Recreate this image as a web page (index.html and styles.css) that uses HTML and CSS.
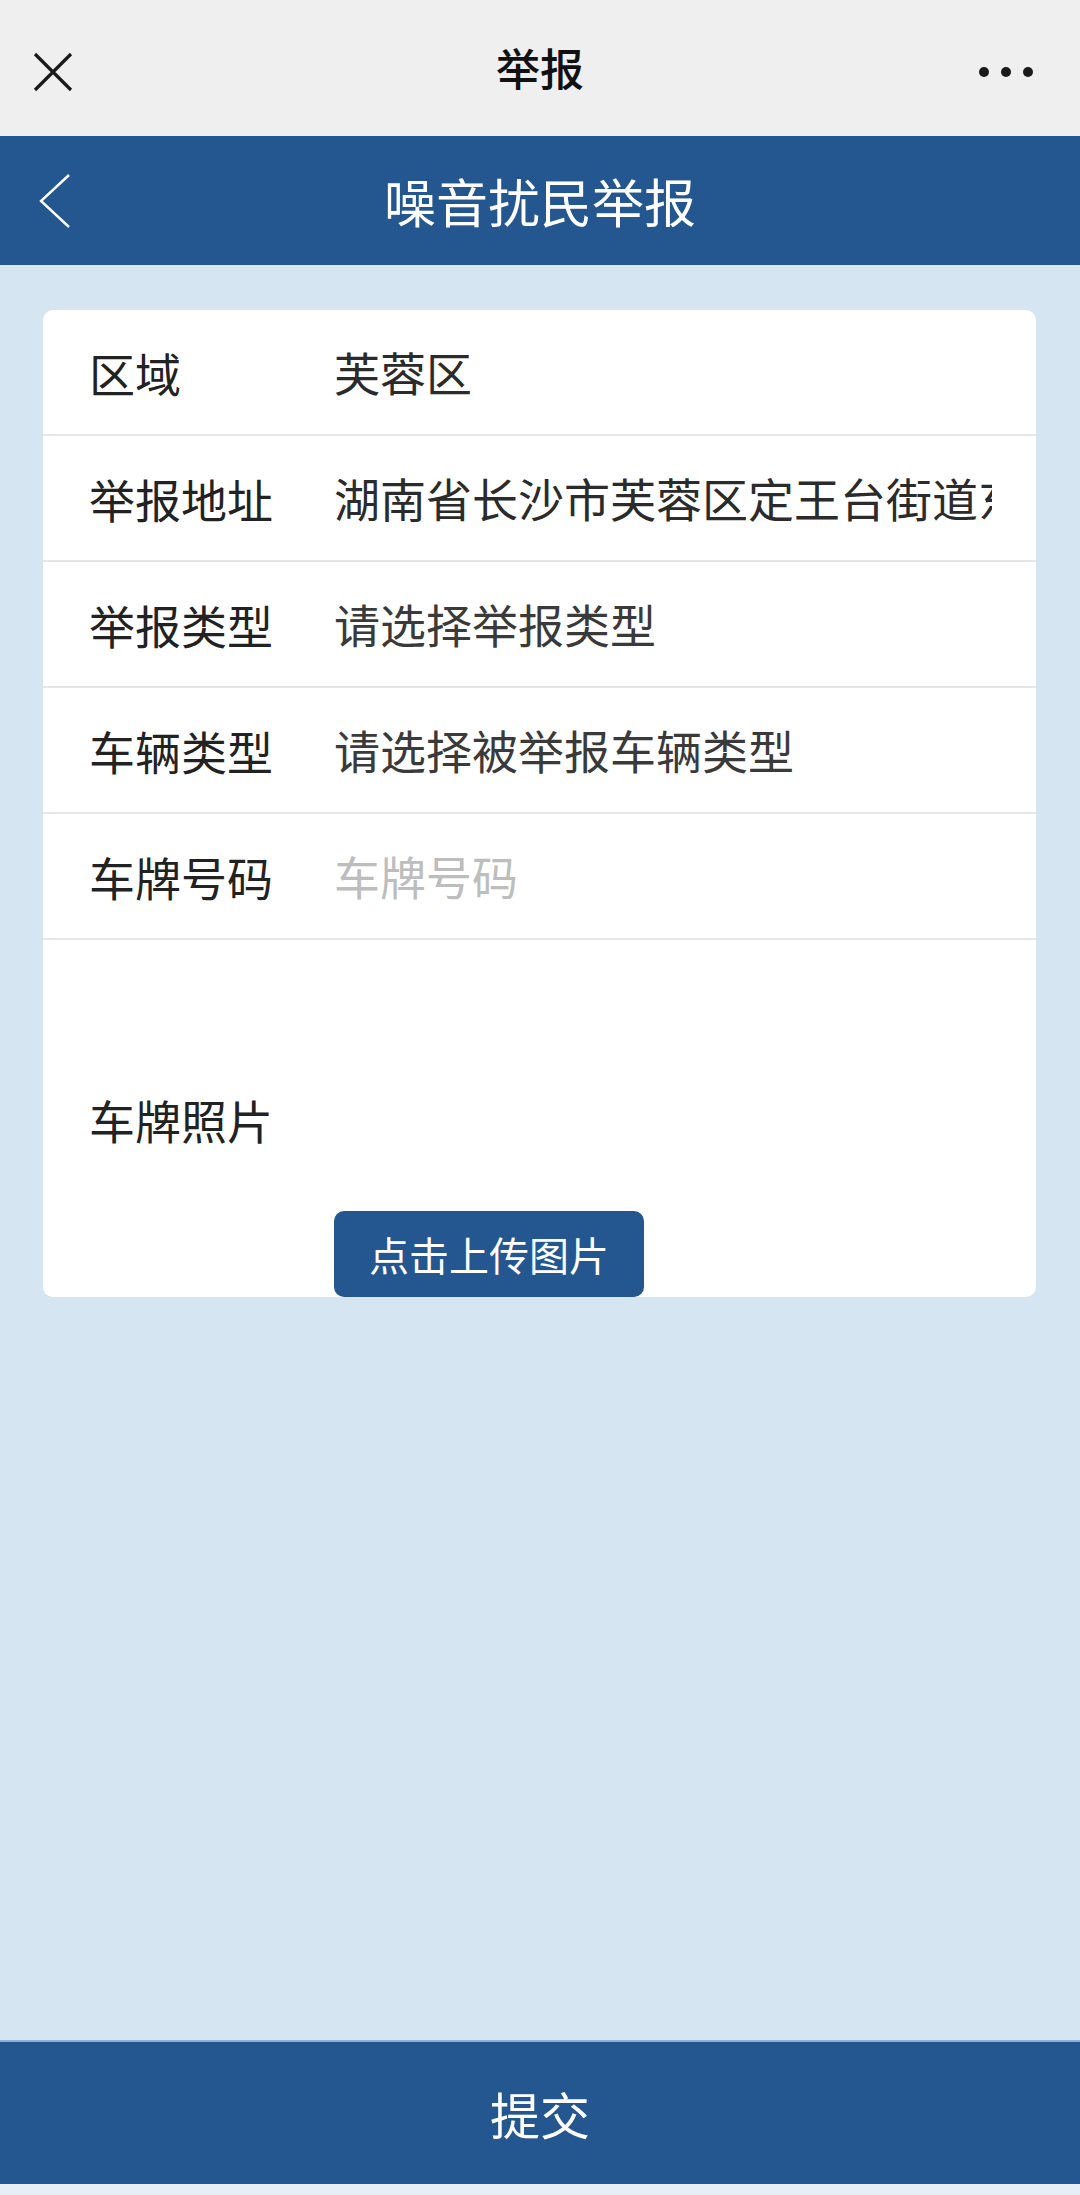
FILE: index.html
```html
<!DOCTYPE html>
<html lang="zh-CN">
<head>
    <meta charset="UTF-8">
    <meta name="viewport" content="width=device-width, initial-scale=1.0">
    <title>举报</title>
    <link rel="stylesheet" href="styles.css">
</head>
<body>
    <!-- 微信顶部栏 -->
    <div class="top-bar">
        <svg class="close-icon" width="40" height="40" viewBox="0 0 40 40">
            <path d="M2 2 L38 38 M38 2 L2 38" stroke="#1a1a1a" stroke-width="3.2" fill="none"/>
        </svg>
        <div class="top-title">举报</div>
        <div class="more-icon">
            <span></span><span></span><span></span>
        </div>
    </div>

    <!-- 页面标题 -->
    <div class="header">
        <svg class="back-icon" width="32" height="54" viewBox="0 0 32 54">
            <polyline points="30,1 2,27 30,53" stroke="#ffffff" stroke-width="2.4" fill="none"/>
        </svg>
        <h1>噪音扰民举报</h1>
    </div>

    <div class="content">
        <div class="form-card">
            <div class="form-row">
                <div class="label">区域</div>
                <div class="value">芙蓉区</div>
            </div>
            <div class="form-row">
                <div class="label">举报地址</div>
                <div class="value clip">湖南省长沙市芙蓉区定王台街道东风路</div>
            </div>
            <div class="form-row">
                <div class="label">举报类型</div>
                <div class="value select">请选择举报类型</div>
            </div>
            <div class="form-row">
                <div class="label">车辆类型</div>
                <div class="value select">请选择被举报车辆类型</div>
            </div>
            <div class="form-row">
                <div class="label">车牌号码</div>
                <input class="value plate-input" type="text" placeholder="车牌号码">
            </div>
            <div class="form-row photo-row">
                <div class="label">车牌照片</div>
                <div class="upload-area">
                    <button class="upload-btn">点击上传图片</button>
                </div>
            </div>
        </div>
    </div>

    <div class="submit-bar">提交</div>
    <div class="bottom-strip"></div>
</body>
</html>
```

FILE: styles.css
```css
body {
    font-family: "Noto Sans CJK SC", "Noto Sans", sans-serif;
    margin: 0;
    min-height: 2195px;
    display: flex;
    flex-direction: column;
    background-color: #d5e5f1;
    color: #222;
}

.top-bar {
    height: 136px;
    background-color: #efefef;
    display: flex;
    align-items: center;
    justify-content: center;
    position: relative;
}

.close-icon {
    position: absolute;
    left: 33px;
    top: 52px;
}

.top-title {
    font-size: 44px;
    font-weight: 500;
    color: #111;
    line-height: 1;
    margin-top: -2px;
}

.more-icon {
    position: absolute;
    left: 979px;
    top: 67px;
    display: flex;
    gap: 12px;
}

.more-icon span {
    width: 10px;
    height: 10px;
    border-radius: 50%;
    background-color: #1a1a1a;
}

.header {
    height: 129px;
    background-color: #245790;
    display: flex;
    align-items: center;
    justify-content: center;
    position: relative;
}

.back-icon {
    position: absolute;
    left: 39px;
    top: 38px;
}

.header h1 {
    margin: 0;
    font-size: 52px;
    font-weight: 400;
    color: #fff;
    line-height: 1;
}

.content {
    flex: 1;
    padding: 45px 44px 0 43px;
}

.form-card {
    background-color: #fff;
    border-radius: 10px;
    overflow: hidden;
}

.form-row {
    height: 126px;
    display: flex;
    align-items: center;
    padding: 0 44px 0 46px;
    border-bottom: 2px solid #e6e6e6;
    box-sizing: border-box;
}

.form-row:last-child {
    border-bottom: none;
}

.label {
    width: 245px;
    flex-shrink: 0;
    font-size: 46px;
    color: #222;
    line-height: 1;
}

.value {
    flex: 1;
    min-width: 0;
    font-size: 46px;
    color: #2b2b2b;
    line-height: 1.2;
}

.clip {
    white-space: nowrap;
    overflow: hidden;
}

.select {
    color: #3a3a3a;
}

.plate-input {
    border: none;
    outline: none;
    padding: 0;
    font-family: inherit;
    background: transparent;
}

.plate-input::placeholder {
    color: #bdbdbd;
}

.photo-row {
    height: 357px;
}

.upload-area {
    align-self: stretch;
    display: flex;
    align-items: flex-end;
}

.upload-btn {
    width: 310px;
    height: 86px;
    border: none;
    border-radius: 10px;
    background-color: #245790;
    color: #fff;
    font-family: inherit;
    font-size: 40px;
    cursor: pointer;
}

.submit-bar {
    height: 142px;
    background-color: #245790;
    border-top: 2px solid #8fb0d6;
    display: flex;
    align-items: center;
    justify-content: center;
    color: #fff;
    font-size: 50px;
}

.bottom-strip {
    height: 11px;
    background-color: #e7eef5;
}
```
